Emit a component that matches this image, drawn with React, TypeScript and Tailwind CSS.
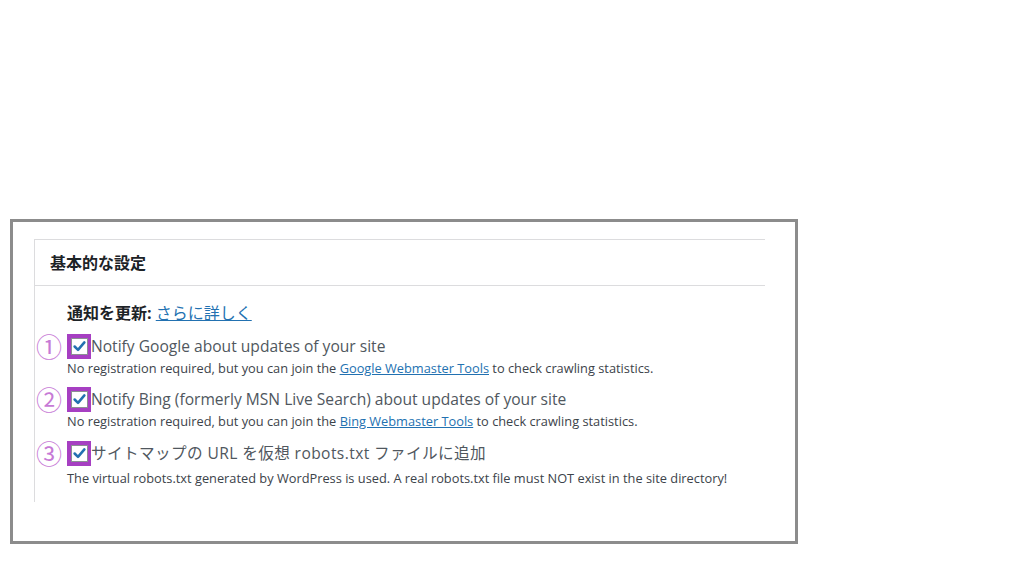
const font = { fontFamily: '"Open Sans", "Noto Sans CJK JP", sans-serif' }

function Check() {
  return (
    <span className="flex h-[25px] w-[24px] shrink-0 items-center justify-center bg-[#a63fc2]">
      <span className="flex h-[17px] w-[17px] items-center justify-center border border-[#8c8f94] bg-white">
        <svg viewBox="0 0 20 20" className="h-[17px] w-[17px]">
          <path d="M3.5 10 L8 14.5 L16.5 4.5" fill="none" stroke="#2271b1" strokeWidth="3.4" strokeLinecap="round" strokeLinejoin="round" />
        </svg>
      </span>
    </span>
  )
}

function Row({ num, label, wide, children }: { num: string; label: string; wide?: boolean; children: React.ReactNode }) {
  return (
    <div className="flex flex-col">
      <div className="flex items-center">
        <span className="flex w-[32px] justify-start pl-[1px] text-[26px] leading-none text-[#c77ad6]" style={{ fontFamily: '"Noto Sans CJK JP", sans-serif' }}>
          {num}
        </span>
        <Check />
        <span className={`text-[15.6px] leading-[25px] text-[#50575e] ${wide ? 'tracking-[0.4px]' : ''}`}>{label}</span>
      </div>
      <p className="pl-[32px] text-[12.8px] leading-[18px] text-[#3c434a]">{children}</p>
    </div>
  )
}

export default function App() {
  return (
    <div className="h-[576px] w-[1024px] bg-white" style={font}>
      <div className="h-[219px]" />
      <div className="ml-[10px] h-[325px] w-[788px] border-[3px] border-[#8c8c8c] bg-white pl-[21px] pt-[17px]">
        <div className="w-[731px] border-l border-t border-[#dcdcde]">
          <div className="flex h-[46px] items-center border-b border-[#dcdcde] pl-[15px] text-[16px] font-bold text-[#1d2327]">
            基本的な設定
          </div>
          <div className="pb-[15px] pt-[15px]">
            <div className="pl-[32px] text-[16px] leading-[24px] text-[#1d2327]">
              <span className="font-bold">通知を更新:</span>{' '}
              <a className="text-[#2271b1] underline">さらに詳しく</a>
            </div>
            <div className="mt-[8px] flex flex-col">
              <Row num="①" label="Notify Google about updates of your site">
                No registration required, but you can join the <a className="text-[#2271b1] underline">Google Webmaster Tools</a> to check crawling statistics.
              </Row>
              <div className="mt-[9px]">
                <Row num="②" label="Notify Bing (formerly MSN Live Search) about updates of your site">
                  No registration required, but you can join the <a className="text-[#2271b1] underline">Bing Webmaster Tools</a> to check crawling statistics.
                </Row>
              </div>
              <div className="mt-[10px]">
                <Row num="③" wide label="サイトマップの URL を仮想 robots.txt ファイルに追加">
                  <span className="mt-[3px] block">The virtual robots.txt generated by WordPress is used. A real robots.txt file must NOT exist in the site directory!</span>
                </Row>
              </div>
            </div>
          </div>
        </div>
      </div>
    </div>
  )
}
